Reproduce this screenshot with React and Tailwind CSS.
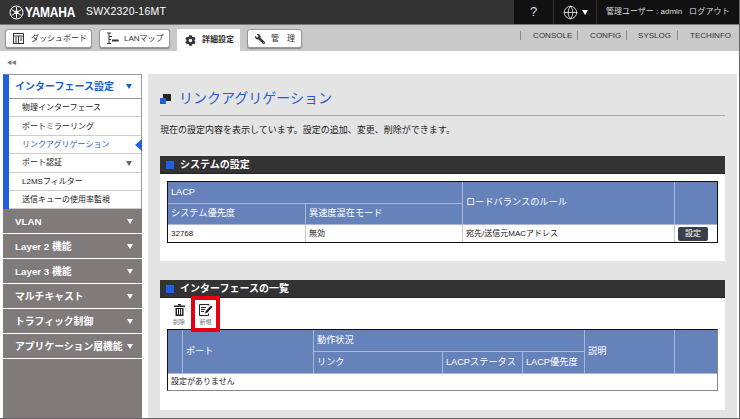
import { Globe } from 'lucide-react';
import { FaCog, FaWrench } from 'react-icons/fa';

const subItems = [
  { label: '物理インターフェース' },
  { label: 'ポートミラーリング' },
  { label: 'リンクアグリゲーション', active: true },
  { label: 'ポート認証', arrow: true },
  { label: 'L2MSフィルター' },
  { label: '送信キューの使用率監視' },
];

const groups = ['VLAN', 'Layer 2 機能', 'Layer 3 機能', 'マルチキャスト', 'トラフィック制御', 'アプリケーション層機能'];

function Arrow({ className }) {
  return (
    <svg width="6" height="5" viewBox="0 0 6 5" className={`shrink-0 ${className || ''}`}>
      <path d="M0 0h6L3 5z" fill="currentColor" />
    </svg>
  );
}

function DashIcon() {
  return (
    <svg width="11" height="11" viewBox="0 0 11 11" fill="none" stroke="#333" strokeWidth="1" className="shrink-0">
      <rect x="0.5" y="0.5" width="10" height="10" />
      <path d="M0.5 3h10M5.5 3v7.5M7 5h2M7 7h2M2 5h2M2 7h2M2 9h2" />
    </svg>
  );
}

function LanIcon() {
  return (
    <svg width="13" height="13" viewBox="0 0 13 13" fill="none" stroke="#333" strokeWidth="1" className="shrink-0">
      <path d="M1 1h4M3 1v10.5M3 4.5h3M3 7.5h2M1 11.5h4M6 8.5h6.5" />
      <path d="M6 8.5h6.5" strokeWidth="2" />
    </svg>
  );
}

function TrashIcon() {
  return (
    <svg width="11" height="12" viewBox="0 0 11 12" fill="#222">
      <rect x="4" y="0" width="3" height="1.5" />
      <rect x="0" y="1.5" width="11" height="1.5" />
      <path d="M1.5 4h8v8h-8zM3 5v5.5h1V5zM5 5v5.5h1V5zM7 5v5.5h1V5z" fillRule="evenodd" />
    </svg>
  );
}

function NewIcon() {
  return (
    <svg width="14" height="12" viewBox="0 0 14 12" fill="none" stroke="#222" strokeWidth="1">
      <path d="M9.5 9.5v2h-9v-11h9.5v1" />
      <path d="M2 3.5h5M2 5.5h4M2 7.5h3" />
      <path d="M6 9.5l.7-2.5L12 1.5 13.5 3 8.2 8.7z" fill="#222" stroke="none" />
    </svg>
  );
}

function NavButton({ icon, label, className }) {
  return (
    <div className={`flex items-center h-[19px] bg-white border border-[#999] rounded-[3px] shadow-[0_1px_1px_#888] text-[8px] text-[#333] whitespace-nowrap ${className}`}>
      {icon}
      <span>{label}</span>
    </div>
  );
}

function SectionHeader({ title }) {
  return (
    <div className="flex items-center h-[18px] bg-[#333333] border-b border-[#222] pl-[6px] gap-[6px]">
      <div className="w-[8px] h-[8px] bg-[#1f5fe0]" />
      <span className="text-white text-[10px] font-bold">{title}</span>
    </div>
  );
}

const th = 'border-r border-b border-[#a9b8d6] font-normal text-left align-middle px-[3px] text-white text-[9.2px] whitespace-nowrap';
const thLast = 'border-b border-[#a9b8d6] font-normal text-left align-middle px-[3px] text-white text-[9.2px]';

export default function App() {
  return (
    <div
      className="w-[740px] h-[419px] overflow-hidden flex flex-col bg-white border-r border-b border-[#666] text-[#222]"
      style={{ fontFamily: '"Liberation Sans", "Noto Sans CJK JP", sans-serif' }}
    >
      {/* Top bar */}
      <header className="flex h-[25px] shrink-0 bg-[#333333] border-b border-[#777]">
        <div className="flex items-center flex-1 pl-[9px]">
          <svg width="15" height="15" viewBox="0 0 15 15" fill="none" stroke="white" strokeWidth="1">
            <circle cx="7.5" cy="7.5" r="6.5" />
            <path d="M7.5 2v11M2.7 4.7l9.6 5.6M2.7 10.3l9.6-5.6" />
            <circle cx="7.5" cy="7.5" r="1.5" fill="white" />
          </svg>
          <span className="ml-[1px] text-white font-bold text-[15px] tracking-[-0.3px] w-[48px] origin-left scale-x-[0.8] whitespace-nowrap">YAMAHA</span>
          <span className="ml-[13px] text-white text-[10.5px] tracking-[0.2px]">SWX2320-16MT</span>
        </div>
        <div className="flex items-center w-[225px] bg-[#111] text-white">
          <div className="flex items-center justify-center w-[40px] h-full text-[13px] text-[#ddd] border-r border-[#333]">?</div>
          <div className="flex items-center justify-center gap-[4px] w-[43px] h-full border-r border-[#333]">
            <Globe size={15} strokeWidth={1.2} />
            <Arrow />
          </div>
          <span className="ml-[9px] text-[8px] text-[#ddd] w-[83px] whitespace-nowrap">管理ユーザー : admin</span>
          <span className="text-[8px] text-[#ddd] tracking-[0.2px] whitespace-nowrap">ログアウト</span>
        </div>
      </header>

      {/* Nav bar */}
      <nav className="flex h-[26px] shrink-0 bg-[#c9c9c9] pl-[5px] pr-[8px]">
        <div className="flex items-start h-full pt-[4px] gap-[7px]">
          <NavButton className="w-[87px] gap-[7px] pl-[7px]" icon={<DashIcon />} label="ダッシュボード" />
          <NavButton className="w-[71px] gap-[5px] pl-[6px]" icon={<LanIcon />} label="LANマップ" />
          <div className="flex items-center gap-[6px] w-[63px] h-[22px] self-end bg-white pl-[8px] text-[8px] font-bold text-[#333] whitespace-nowrap">
            <FaCog size={11} />
            <span>詳細設定</span>
          </div>
          <NavButton className="w-[55px] gap-[6px] pl-[7px]" icon={<FaWrench size={10} className="-scale-x-100" />} label="管　理" />
        </div>
        <div className="flex items-center ml-auto h-full pb-[5px] text-[8px] leading-[9px] text-[#333] whitespace-nowrap">
          <span className="border-l border-[#888] pl-[12px] w-[57px]">CONSOLE</span>
          <span className="border-l border-[#888] pl-[12px] w-[49px]">CONFIG</span>
          <span className="border-l border-[#888] pl-[11px] w-[51px]">SYSLOG</span>
          <span className="border-l border-[#888] pl-[12px]">TECHINFO</span>
        </div>
      </nav>

      <div className="flex items-center h-[23px] shrink-0 pl-[7px] text-[#777] text-[5px] tracking-[-0.5px]">◀◀</div>

      <div className="flex flex-1 min-h-0 pl-[3px]">
        {/* Sidebar */}
        <aside className="flex flex-col w-[139px] bg-[#7f7b7b] shrink-0">
          <div className="bg-white border-l-[6px] border-[#1f5fe0] border-t border-r border-t-[#999] border-r-[#999]">
            <div className="flex items-center justify-between h-[24px] pl-[6px] pr-[9px] border-b border-[#999] text-[#1f5fd0] text-[10px] font-bold whitespace-nowrap">
              <span>インターフェース設定</span>
              <Arrow />
            </div>
            {subItems.map((item) => (
              <div
                key={item.label}
                className={`relative flex items-center justify-between h-[18.4px] pt-[1px] pl-[13px] pr-[9px] border-b border-[#ccc] text-[8px] whitespace-nowrap ${item.active ? 'text-[#2a5fc8]' : 'text-[#222]'}`}
              >
                <span>{item.label}</span>
                {item.arrow && <Arrow className="text-[#666]" />}
                {item.active && (
                  <svg width="7" height="12" viewBox="0 0 7 12" className="absolute -right-[1px] top-[3px] text-[#1f5fe0]">
                    <path d="M7 0v12L0 6z" fill="currentColor" />
                  </svg>
                )}
              </div>
            ))}
          </div>
          {groups.map((g) => (
            <div key={g} className="flex items-center justify-between h-[25px] pt-[1px] pl-[12px] pr-[9px] border-b border-white text-white text-[9.8px] font-bold whitespace-nowrap shrink-0">
              <span>{g}</span>
              <Arrow />
            </div>
          ))}
        </aside>

        {/* Main */}
        <main className="flex-1 ml-[6px] bg-[#e4e4e4] px-[12px] mr-[2px]">
          <div className="flex items-center h-[42px] pt-[7px] gap-[8px] border-b border-[#aaa]">
            <svg width="11" height="11" viewBox="0 0 11 11">
              <rect x="3" y="1" width="8" height="7" fill="#222" />
              <rect x="0" y="5" width="6" height="6" fill="#1f5fd0" />
            </svg>
            <h1 className="text-[#1f5fd0] text-[14px] leading-none">リンクアグリゲーション</h1>
          </div>
          <p className="mt-[7px] text-[9px] leading-[14px] text-[#222]">現在の設定内容を表示しています。設定の追加、変更、削除ができます。</p>

          <section className="mt-[19px]">
            <SectionHeader title="システムの設定" />
            <div className="bg-white px-[7px] pt-[7px] pb-[18px]">
              <table className="w-[551px] table-fixed border-separate border-spacing-0 border border-[#111] text-[8px]">
                <colgroup>
                  <col className="w-[138px]" />
                  <col className="w-[157px]" />
                  <col className="w-[212px]" />
                  <col className="w-[42px]" />
                </colgroup>
                <thead className="bg-[#6682ba]">
                  <tr className="h-[22px]">
                    <th colSpan={2} className={th}>LACP</th>
                    <th rowSpan={2} className={th}>ロードバランスのルール</th>
                    <th rowSpan={2} className={thLast}></th>
                  </tr>
                  <tr className="h-[21px]">
                    <th className={th}>システム優先度</th>
                    <th className={th}>異速度混在モード</th>
                  </tr>
                </thead>
                <tbody>
                  <tr className="h-[17px]">
                    <td className="border-r border-[#ccc] px-[3px]">32768</td>
                    <td className="border-r border-[#ccc] px-[3px]">無効</td>
                    <td className="border-r border-[#ccc] px-[3px]">宛先/送信元MACアドレス</td>
                    <td className="px-[3px]">
                      <div className="flex items-center justify-center w-[30px] h-[14px] bg-[#3a3f4a] rounded-[2px] text-white text-[8px]">設定</div>
                    </td>
                  </tr>
                </tbody>
              </table>
            </div>
          </section>

          <section className="mt-[19px]">
            <SectionHeader title="インターフェースの一覧" />
            <div className="bg-white px-[7px] pb-[19px]">
              <div className="flex h-[31px] gap-[1px] pl-[2px]">
                <div className="flex flex-col items-center w-[20px] pt-[6px] gap-[1px]">
                  <TrashIcon />
                  <span className="text-[6px] leading-[10px] text-[#777]">削除</span>
                </div>
                <div className="flex flex-col items-center w-[29px] h-[36px] -mt-[2px] pt-[4px] gap-[1px] border-[4px] border-[#e60012] ml-[1px]">
                  <NewIcon />
                  <span className="text-[6px] leading-[10px] text-[#777]">新規</span>
                </div>
              </div>
              <table className="w-[551px] table-fixed border-separate border-spacing-0 border border-[#111] border-b-[#888] border-r-[#888] text-[8px]">
                <colgroup>
                  <col className="w-[15px]" />
                  <col className="w-[131px]" />
                  <col className="w-[129px]" />
                  <col className="w-[80px]" />
                  <col className="w-[62px]" />
                  <col className="w-[90px]" />
                  <col className="w-[42px]" />
                </colgroup>
                <thead className="bg-[#6682ba]">
                  <tr className="h-[22px]">
                    <th rowSpan={2} className={th}></th>
                    <th rowSpan={2} className={th}>ポート</th>
                    <th colSpan={3} className={th}>動作状況</th>
                    <th rowSpan={2} className={th}>説明</th>
                    <th rowSpan={2} className={thLast}></th>
                  </tr>
                  <tr className="h-[22px]">
                    <th className={th}>リンク</th>
                    <th className={th}>LACPステータス</th>
                    <th className={th}>LACP優先度</th>
                  </tr>
                </thead>
                <tbody>
                  <tr className="h-[16px]">
                    <td colSpan={7} className="px-[3px]">設定がありません</td>
                  </tr>
                </tbody>
              </table>
            </div>
          </section>
        </main>
      </div>
    </div>
  );
}
